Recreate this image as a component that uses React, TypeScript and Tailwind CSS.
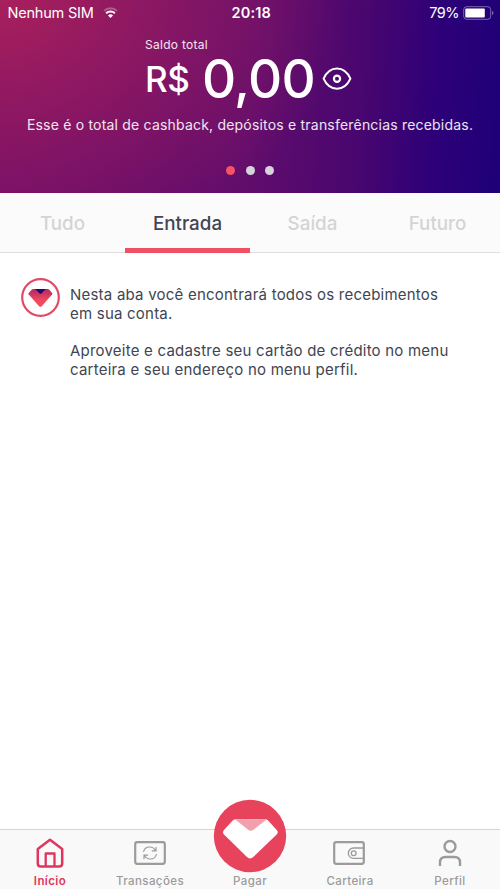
import type { ReactNode } from "react";

function StatusBar() {
  return (
    <div className="flex h-[26px] items-center justify-between pl-[7.500px] pr-[5px] text-[14.5px] leading-[26px]">
      <div className="flex w-[180px] items-center gap-[9px]">
        <span className="tracking-[-0.2px]">Nenhum SIM</span>
        <svg width="15" height="12" viewBox="0 0 16 13" fill="none">
          <path d="M1 4.2A10 10 0 0 1 15 4.2" stroke="#fff" strokeOpacity=".3" strokeWidth="2" />
          <path d="M3.3 6.8A6.8 6.8 0 0 1 12.7 6.8" stroke="#fff" strokeWidth="2.200" />
          <path d="M5.3 9.200A4 4 0 0 1 10.7 9.200L8 12Z" fill="#fff" />
        </svg>
      </div>
      <span className="text-[14.5px] font-semibold tracking-[0.2px]">20:18</span>
      <div className="flex w-[180px] items-center justify-end gap-[4px]">
        <span className="text-[14.5px] tracking-[-0.500px]">79%</span>
        <svg width="32" height="14" viewBox="0 0 32 14" fill="none">
          <rect x=".7" y=".7" width="27" height="12.6" rx="3" stroke="#fff" strokeOpacity=".4" />
          <rect x="2.3" y="2.5" width="19.5" height="9" rx="1" fill="#fff" />
          <path d="M29.2 5v4c1.6-.5 1.6-3.5 0-4Z" fill="#fff" fillOpacity=".5" />
        </svg>
      </div>
    </div>
  );
}

function Header() {
  return (
    <header className="h-[193px] bg-[radial-gradient(ellipse_350px_250px_at_0_0,#a8205c_0%,#a8205c90_40%,#a8205c00_100%),linear-gradient(94deg,#720e69_0%,#620d6c_50%,#48066f_72%,#2e0078_86%,#1e0078_100%)] text-white">
      <StatusBar />
      <div className="flex flex-col">
        <div className="mt-[11px] pl-[145px] text-[12px] leading-[16px] tracking-[0.270px] text-white/90">Saldo total</div>
        <div className="-mt-px flex h-[54px] items-center pl-[145px]">
          <span className="w-[57px] text-[35px] font-medium leading-[54px] tracking-[-0.5px]">R$</span>
          <span className="w-[120px] text-[53px] font-medium leading-[54px] tracking-[-0.700px]">0,00</span>
          <svg width="30" height="24" viewBox="0 0 30 24" fill="none" stroke="#fff" strokeWidth="2">
            <path d="M1.6 11.700C4 6.300 8.800 1.500 15 1.500s11 4.800 13.400 10.200C26 17.100 21.200 21.700 15 21.700S4 17.100 1.600 11.700Z" strokeLinejoin="round" />
            <circle cx="15" cy="11.700" r="3.100" strokeWidth="2.200" />
          </svg>
        </div>
        <p className="mt-[9px] whitespace-nowrap text-center text-[14px] leading-[20px] tracking-[0.200px] text-white/90">
          Esse é o total de cashback, depósitos e transferências recebidas.
        </p>
        <div className="mt-[31px] flex justify-center gap-[10.500px]">
          <span className="size-[9px] rounded-full bg-[#f35469]" />
          <span className="size-[9px] rounded-full bg-[#d7d2dc]" />
          <span className="size-[9px] rounded-full bg-[#d7d2dc]" />
        </div>
      </div>
    </header>
  );
}

function Tab({ label, active }: { label: string; active?: boolean }) {
  return (
    <div
      className={`h-[60px] pt-[18px] leading-[26px] ${
        active ? "border-b-[5px] border-[#ef5063] text-[#414654]" : "border-b border-[#dedede]"
      }`}
    >
      {label}
    </div>
  );
}

function Tabs() {
  return (
    <div className="grid h-[60px] shrink-0 grid-cols-4 bg-[#fbfbfb] text-center text-[18.800px] font-medium text-[#d4d4d4]">
      <Tab label="Tudo" />
      <Tab label="Entrada" active />
      <Tab label="Saída" />
      <Tab label="Futuro" />
    </div>
  );
}

function Message() {
  return (
    <section className="flex flex-1 items-start bg-white pl-[21px] pt-[25px]">
      <svg className="shrink-0" width="39" height="39" viewBox="0 0 39 39">
        <defs>
          <linearGradient id="gem" x2="0" y2="1">
            <stop stopColor="#b52660" />
            <stop offset=".65" stopColor="#ef4b5d" />
          </linearGradient>
        </defs>
        <circle cx="19.500" cy="19.500" r="18.300" fill="none" stroke="#e14a63" strokeWidth="2.200" />
        <path d="M12.500 11h14q1 0 1.600.6l3 3.300q.7.9 0 1.700L20.700 28.200q-1.300 1.200-2.600 0L7.700 16.600q-.7-.8 0-1.700l3.200-3.300q.6-.6 1.600-.6Z" fill="url(#gem)" />
        <path d="M14.300 11h10.400l-4 4.300q-1.200 1-2.400 0Z" fill="#1e0873" />
      </svg>
      <div className="ml-[10px] mt-[8px] whitespace-nowrap text-[15px] leading-[18.700px] tracking-[0.220px] text-[#414552]">
        <p>Nesta aba você encontrará todos os recebimentos</p>
        <p>em sua conta.</p>
        <p className="mt-[18.700px]">Aproveite e cadastre seu cartão de crédito no menu</p>
        <p>carteira e seu endereço no menu perfil.</p>
      </div>
    </section>
  );
}

function NavItem({ label, active, children }: { label: string; active?: boolean; children?: ReactNode }) {
  return (
    <div
      className={`relative flex flex-col items-center ${
        active ? "font-semibold text-[#df355f]" : "font-medium text-[#9b9b9b]"
      }`}
    >
      <div className="flex h-[44px] items-center pt-px">{children}</div>
      <span className="text-[11.500px] leading-[15px] tracking-[0.400px]">{label}</span>
    </div>
  );
}

function BottomNav() {
  return (
    <nav className="grid h-[60px] shrink-0 grid-cols-5 border-t border-[#d5d5d5] bg-[#f9f9f9]">
      <NavItem label="Início" active>
        <svg width="28" height="30" viewBox="0 0 28 30" fill="none" stroke="currentColor" strokeWidth="2.500" strokeLinejoin="round">
          <path d="M1.800 11 14 1.800 26.200 11V25.500q0 3-3 3H4.800q-3 0-3-3Z" />
          <path d="M9.700 28V15.500h8.800V28" strokeWidth="2.300" />
        </svg>
      </NavItem>
      <NavItem label="Transações">
        <svg width="32" height="24" viewBox="0 0 32 24" fill="none" stroke="currentColor">
          <rect x="1.200" y="1.200" width="29.600" height="21.600" rx="2" strokeWidth="2.200" />
          <path d="M9.500 11C10.100 8 12.600 6 15.700 6c2.500 0 4.600 1.300 5.700 3.500M22 6v3.900h-4.200M22.500 13c-.6 3-3.100 5-6.200 5-2.500 0-4.600-1.300-5.700-3.500M10 18.200v-4.100h4.200" strokeWidth="1.200" />
        </svg>
      </NavItem>
      <NavItem label="Pagar">
        <svg className="absolute -top-[31px] left-1/2 -translate-x-1/2" width="74" height="74" viewBox="0 0 74 74">
          <circle cx="37" cy="37" r="36.200" fill="#e8435c" />
          <path d="M22.500 20.300h30q1.500 0 2.600 1.200l8.600 9.500q2.200 2.400 0 4.500L40.500 57.800q-3.400 3.200-6.800 0L11 35.500q-2-2 0-4.500l8.700-9.500q1.200-1.200 2.800-1.200Z" fill="#fff" />
          <path d="M22 20.300h32L40.500 30.700q-2.700 1.900-5.400 0Z" fill="#f3a0ae" />
        </svg>
      </NavItem>
      <NavItem label="Carteira">
        <svg className="mr-[1.500px]" width="32" height="24" viewBox="0 0 32 24" fill="none" stroke="currentColor">
          <rect x="1.200" y="1.200" width="29.600" height="21.600" rx="2" strokeWidth="2.200" />
          <path d="M30 7H20.500a5.200 5.200 0 0 0 0 10.400H30" strokeWidth="1.300" />
          <circle cx="20.700" cy="12.200" r="2.400" strokeWidth="1.300" />
        </svg>
      </NavItem>
      <NavItem label="Perfil">
        <svg width="24" height="28" viewBox="0 0 24 28" fill="none" stroke="currentColor" strokeWidth="2.400">
          <circle cx="12" cy="7.500" r="5.500" />
          <path d="M2 27v-3.500q0-5.500 5.500-5.500h9q5.500 0 5.500 5.500V27" />
        </svg>
      </NavItem>
    </nav>
  );
}

export default function App() {
  return (
    <main className="flex h-[889px] w-[500px] flex-col overflow-hidden bg-white font-['Inter',sans-serif]">
      <Header />
      <Tabs />
      <Message />
      <BottomNav />
    </main>
  );
}
